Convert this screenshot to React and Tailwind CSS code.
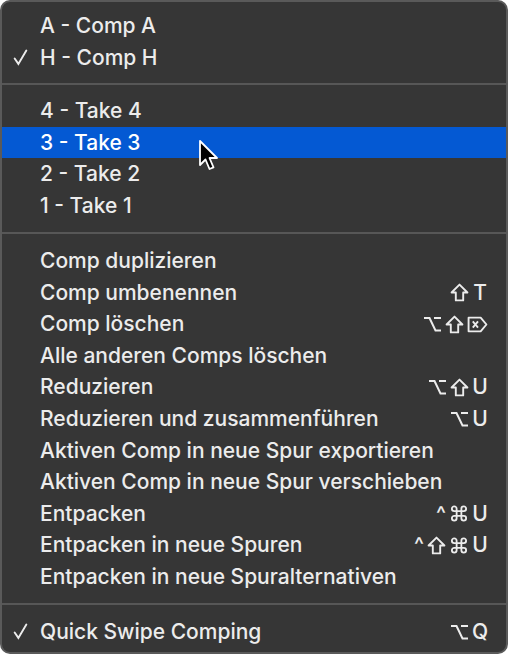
const Shift = () => (
  <svg width="19" height="19" viewBox="0 0 18 18" fill="none" stroke="currentColor" strokeWidth="1.8" strokeLinejoin="round">
    <path d="M9 1.5 L16.5 9 H12.5 V16.5 H5.5 V9 H1.5 Z" />
  </svg>
);

const Option = () => (
  <svg width="19" height="18" viewBox="0 0 18 18" fill="none" stroke="currentColor" strokeWidth="2">
    <path d="M0.5 3 H6 L12 15.5 H17.5" />
    <path d="M10.5 3 H17.5" />
  </svg>
);

const FwdDelete = () => (
  <svg width="21" height="19" viewBox="0 0 20 18" fill="none" stroke="currentColor" strokeWidth="1.8" strokeLinejoin="round">
    <path d="M1.5 2.5 H13 L18.5 9 L13 15.5 H1.5 Z" />
    <path d="M5.5 6 L10.5 12 M10.5 6 L5.5 12" />
  </svg>
);

const Cmd = () => (
  <svg width="20" height="19" viewBox="0 0 24 24" fill="none" stroke="currentColor" strokeWidth="2.3">
    <path d="M15 6v12a3 3 0 1 0 3-3H6a3 3 0 1 0 3 3V6a3 3 0 1 0-3 3h12a3 3 0 1 0-3-3" />
  </svg>
);

const Check = () => (
  <svg width="15" height="17" viewBox="0 0 14 16" fill="none" stroke="currentColor" strokeWidth="1.8" strokeLinecap="round">
    <path d="M1.5 9 L5 14 L12.5 1.5" />
  </svg>
);

const K = ({ children }) => <span className="w-[16px] text-center">{children}</span>;
const Caret = () => <span className="w-[11px] text-right">^</span>;

const shortcuts = {
  shiftT: [<Shift key="a" />, <K key="b">T</K>],
  optShiftDel: [<Option key="a" />, <Shift key="b" />, <FwdDelete key="c" />],
  optShiftU: [<Option key="a" />, <Shift key="b" />, <K key="c">U</K>],
  optU: [<Option key="a" />, <K key="b">U</K>],
  ctrlCmdU: [<Caret key="a" />, <Cmd key="b" />, <K key="c">U</K>],
  ctrlShiftCmdU: [<Caret key="a" />, <Shift key="b" />, <Cmd key="c" />, <K key="d">U</K>],
  optQ: [<Option key="a" />, <K key="b">Q</K>],
};

const Row = ({ label, checked, active, keys }) => (
  <div className={`relative flex h-[31.6px] items-center pl-[38px] pr-[18px] ${active ? "bg-[#0459d3] text-white" : "text-[#ececec]"}`}>
    {checked && (
      <span className="absolute left-[11px] top-[7px]">
        <Check />
      </span>
    )}
    <span className="flex-1">{label}</span>
    {keys && <span className="flex items-center gap-[3px]">{keys}</span>}
  </div>
);

const Separator = ({ h = "h-[22px]" }) => (
  <div className={`flex ${h} items-center`}>
    <div className="h-[2px] w-full bg-[#575757]" />
  </div>
);

export default function App() {
  return (
    <div className="h-[654px] w-[508px] bg-white" style={{ fontFamily: "Inter, 'Noto Sans', sans-serif" }}>
      <div className="relative h-full w-full overflow-hidden rounded-[10px] border-2 border-[#5a5a5a] bg-[#363636] pt-[8px] text-[21px] font-medium">
        <Row label="A - Comp A" />
        <Row label="H - Comp H" checked />
        <Separator />
        <Row label="4 - Take 4" />
        <Row label="3 - Take 3" active />
        <Row label="2 - Take 2" />
        <Row label="1 - Take 1" />
        <Separator h="h-[23.5px]" />
        <Row label="Comp duplizieren" />
        <Row label="Comp umbenennen" keys={shortcuts.shiftT} />
        <Row label="Comp löschen" keys={shortcuts.optShiftDel} />
        <Row label="Alle anderen Comps löschen" />
        <Row label="Reduzieren" keys={shortcuts.optShiftU} />
        <Row label="Reduzieren und zusammenführen" keys={shortcuts.optU} />
        <Row label="Aktiven Comp in neue Spur exportieren" />
        <Row label="Aktiven Comp in neue Spur verschieben" />
        <Row label="Entpacken" keys={shortcuts.ctrlCmdU} />
        <Row label="Entpacken in neue Spuren" keys={shortcuts.ctrlShiftCmdU} />
        <Row label="Entpacken in neue Spuralternativen" />
        <Separator h="h-[23.5px]" />
        <Row label="Quick Swipe Comping" checked keys={shortcuts.optQ} />

        {/* mouse pointer */}
        <svg className="absolute left-[196px] top-[137px]" width="24" height="34" viewBox="0 0 24 34">
          <path d="M2 2 L2 26 L7.5 20.5 L11.5 30 L15.5 28.3 L11.5 19 L19 19 Z" fill="#000" stroke="#fff" strokeWidth="1.8" strokeLinejoin="round" />
        </svg>
      </div>
    </div>
  );
}
